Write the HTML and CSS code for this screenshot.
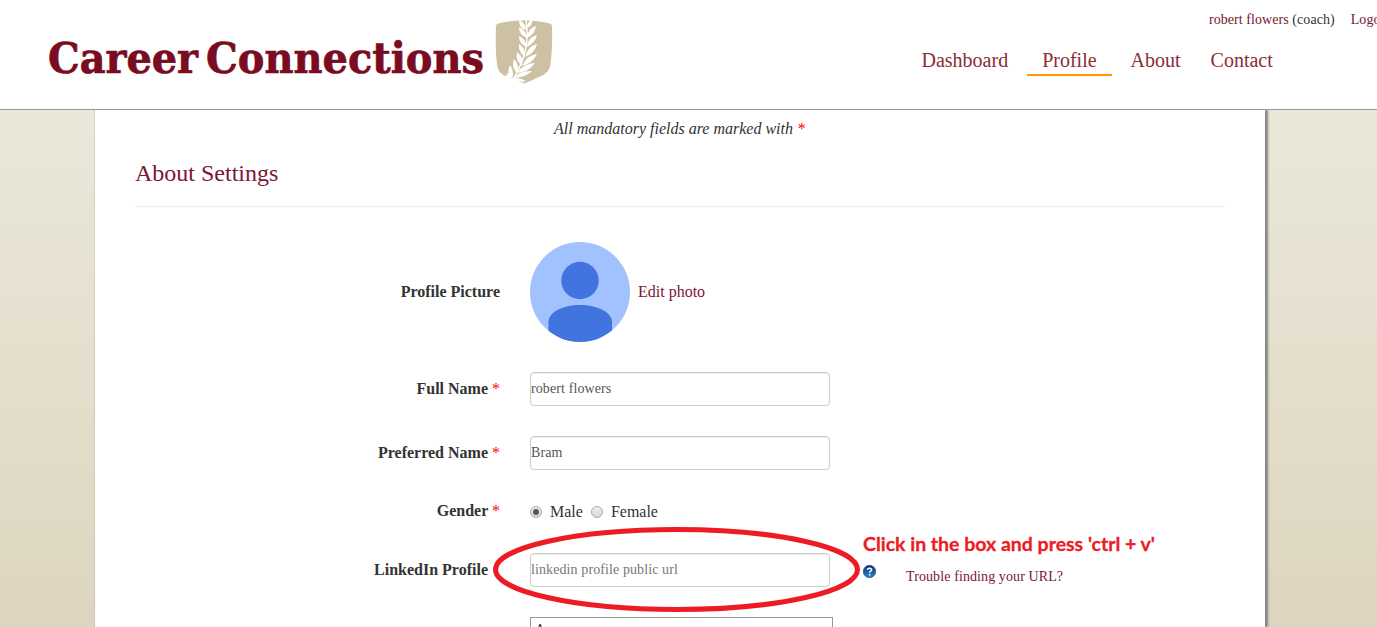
FILE: index.html
```html
<!DOCTYPE html>
<html lang="en">
<head>
<meta charset="utf-8">
<title>Career Connections</title>
<link rel="stylesheet" href="styles.css">
</head>
<body>
<header class="header">
  <div class="brand">
    <svg class="brand-name" width="446" height="60" viewBox="0 0 446 60"><text x="0" y="48" textLength="150" lengthAdjust="spacingAndGlyphs">Career</text><text x="158" y="48" textLength="278" lengthAdjust="spacingAndGlyphs">Connections</text></svg>
    <svg class="shield" width="58" height="66" viewBox="0 0 58 66">
      <path fill="#cdc1a3" d="M1 7Q1 5 3 4.500Q15 1.500 29 1.500Q43 1.500 55 4.500Q57 5 57 7C57.500 20 57 34 55.500 45C54.500 52 51 55 45 57.500C40 60 34 62.500 29 64.500C24 62 17 60 12 57.500C5 55 3 52 2 45C0.500 34 .5 20 1 7Z"/>
      <path fill="none" stroke="#fff" stroke-width="1.400" d="M31 1C34 21 32 38 16 64"/>
      <g fill="#fff">
        <path d="M31 11Q24 9 24 1Q31 4 31 11Z"/>
        <path d="M32 9Q32 3 37 1Q38 6 32 9Z"/>
        <path d="M32 19Q24 16 24 8Q31 11 32 19ZM32 19Q33 9 41 7Q40 15 32 19Z"/>
        <path d="M32 28Q24 25 24 17Q31 20 32 28ZM32 28Q33 18 42 16Q40 24 32 28Z"/>
        <path d="M30 38Q23 33 24 25Q31 29 30 38ZM30 38Q33 27 42 25Q40 34 30 38Z"/>
        <path d="M27 47Q20 41 22 33Q29 38 27 47ZM27 47Q32 36 42 35Q38 44 27 47Z"/>
        <path d="M22 54Q16 48 19 40Q25 46 22 54ZM22 54Q29 44 40 44Q34 53 22 54Z"/>
        <path d="M17 60Q11 54 15 46Q20 53 17 60ZM18 59Q26 51 37 52Q30 59 18 59Z"/>
        <path d="M10 62Q11 54 15 53Q17 58 14 65ZM16 60Q23 57 31 62L28 63Q22 61 16 63Z"/>
      </g>
    </svg>
  </div>
  <div class="header-right">
    <div class="account"><a class="user">robert flowers</a><span class="role">&nbsp;(coach)</span><a class="logout">Logout</a></div>
    <nav class="nav"><a>Dashboard</a><a class="active">Profile</a><a>About</a><a>Contact</a></nav>
  </div>
</header>
<main class="page">
  <p class="note">All mandatory fields are marked with <span class="star">*</span></p>
  <h1 class="title">About Settings</h1>
  <form class="form">
    <div class="row row-photo">
      <label class="label">Profile Picture</label>
      <svg width="100" height="100" viewBox="0 0 100 100"><defs><clipPath id="disc"><circle cx="50" cy="50" r="50"/></clipPath></defs><g clip-path="url(#disc)"><path fill="#a1c2fe" d="M0 0H100V100H0Z"/><circle cx="50" cy="38.5" r="18.7" fill="#4274e0"/><path fill="#4274e0" d="M18.500 100V80C18.500 70 33 63 50 63S82 70 82 80V100Z"/></g></svg>
      <a class="edit">Edit photo</a>
    </div>
    <div class="row row-input"><label class="label">Full Name <span class="star">*</span></label><input class="field" value="robert flowers"></div>
    <div class="row row-input"><label class="label">Preferred Name <span class="star">*</span></label><input class="field" value="Bram"></div>
    <div class="row row-gender">
      <label class="label">Gender <span class="star">*</span></label>
      <span class="radio checked"></span><span class="choice">Male</span><span class="radio"></span><span class="choice">Female</span>
    </div>
    <div class="row row-link">
      <label class="label label-plain">LinkedIn Profile</label><input class="field" placeholder="linkedin profile public url">
      <svg class="help" width="13" height="13" viewBox="0 0 13 13"><defs><linearGradient id="hb" x2="0" y2="1"><stop stop-color="#0c356f"/><stop offset="1" stop-color="#2a85d5"/></linearGradient></defs><circle cx="6.5" cy="6.5" r="6.2" fill="url(#hb)" stroke="#17376b" stroke-width=".6"/><path d="M4.500 5C4.500 2.500 8.700 2.600 8.600 4.800C8.500 6.100 6.600 6.200 6.600 7.800M6.600 9V10.500" fill="none" stroke="#fff" stroke-width="1.500"/></svg>
      <a class="trouble">Trouble finding your URL?</a>
    </div>
    <div class="row"><span class="label"></span><div class="bio">A</div></div>
  </form>
</main>
<svg class="annotation" width="680" height="100" viewBox="0 0 680 100"><ellipse cx="186.500" cy="49.500" rx="181" ry="40" fill="none" stroke="#ed1c24" stroke-width="5"/><text class="hint" x="373" y="31" textLength="292" lengthAdjust="spacingAndGlyphs">Click in the box and press 'ctrl + v'</text></svg>
</body>
</html>
```
FILE: styles.css
```css
* { box-sizing: border-box; }
body {
  margin: 0;
  height: 627px;
  overflow: hidden;
  display: flex;
  flex-direction: column;
  font: 16px/20px "Liberation Serif", "Times New Roman", serif;
  color: #333;
  background: linear-gradient(#ebe8da 110px, #ddd5bf 627px);
}
.header {
  position: relative;
  z-index: 1;
  flex: none;
  display: flex;
  justify-content: space-between;
  height: 110px;
  border-bottom: 1px solid #999;
  background: #fff;
}
.brand { display: flex; padding: 19px 0 0 48px; }
.brand-name { margin-top: 6px; overflow: visible; }
.brand-name text { font: bold 42px "DejaVu Serif", serif; fill: #7a0c22; stroke: #7a0c22; stroke-width: .7px; }
.shield { margin-left: 1px; }
.header-right { width: 456px; flex: none; overflow: hidden; }
.account { display: flex; padding: 10px 0 0 288px; font-size: 14px; letter-spacing: .06px; white-space: nowrap; }
.user, .logout { color: #76152f; }
.logout { margin-left: 16px; }
.nav { display: flex; padding-top: 16px; font-size: 20px; line-height: 28px; color: #8d2b36; }
.nav a { padding: 0 15px; }
.nav a:first-child { padding-right: 19px; padding-left: .5px; }
.nav .active { border-bottom: 2px solid #ff9900; margin-right: 4px; }
.page {
  flex: none;
  width: 1170px;
  height: 517px;
  margin-left: 95px;
  padding: 0 40px;
  overflow: hidden;
  background: #fff;
  box-shadow: 3px 0 2px #858585, 0 0 1px #777;
}
.note { margin: 0; padding: 9px 1px 0 0; text-align: center; font-style: italic; }
.star { color: #ff0000; font-weight: normal; }
.title {
  margin: 19px 0 35px;
  height: 49px;
  border-bottom: 1px solid #eee;
  font-size: 24px;
  line-height: 30px;
  font-weight: normal;
  color: #7d1535;
}
.row { display: flex; align-items: center; }
.label { width: 365px; margin-right: 30px; text-align: right; font-weight: bold; }
.label-plain { padding-right: 12px; }
.row-photo { margin-bottom: 30px; }
.edit { margin: -1px 0 0 8px; color: #7d1535; }
.row-input { height: 34px; margin-bottom: 30px; }
.field {
  width: 300px;
  height: 34px;
  padding: 0;
  border: 1px solid #ccc;
  border-radius: 4px;
  box-shadow: inset 0 1px 1px rgba(0, 0, 0, .075);
  font: 14px "Liberation Serif", serif;
  letter-spacing: .1px;
  color: #555;
}
.field::placeholder { color: #777; }
.row-gender { height: 23px; margin-bottom: 30px; }
.row-gender .label { margin-top: -1px; }
.radio {
  display: flex;
  align-items: center;
  justify-content: center;
  width: 12px;
  height: 12px;
  border: 1px solid #aaa;
  border-radius: 50%;
  background: linear-gradient(#eee, #d8d8d8);
}
.checked::after { content: ""; width: 6px; height: 6px; border-radius: 50%; background: #555; }
.choice { margin: 1px 8px 0; }
.row-link { margin-bottom: 30px; }
.help { margin: 3px 0 0 33px; }
.trouble { margin: 14px 0 0 30px; font-size: 14px; letter-spacing: .1px; color: #7d1535; }
.bio { width: 303px; height: 50px; padding: 2px 4px; border: 1px solid #999; font-size: 14px; }
.annotation { position: absolute; left: 490px; top: 520px; }
.hint { font: bold 19.5px Lato, sans-serif; fill: #ed1c24; stroke: #ed1c24; stroke-width: .3px; }
```
